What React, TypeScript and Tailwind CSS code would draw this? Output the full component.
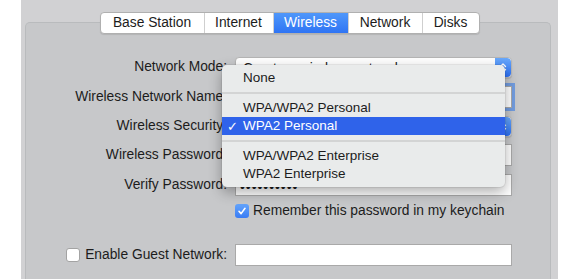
import type { ReactNode } from "react";

const TABS = [
  { label: "Base Station", width: "w-[103px]" },
  { label: "Internet", width: "w-[69px]" },
  { label: "Wireless", width: "w-[75px]" },
  { label: "Network", width: "w-[74px]" },
  { label: "Disks", width: "w-[57px]" }
];

const Stepper = () => (
  <div className="flex h-full w-[16px] items-center justify-center rounded-r-[4px] bg-gradient-to-b from-[#6aa9fb] to-[#2c6ff4]">
    <svg width="8" height="12" viewBox="0 0 8 12" fill="none" stroke="white" strokeWidth="1.4" strokeLinecap="round" strokeLinejoin="round">
      <path d="M1.5 4.5 4 2l2.5 2.5" />
      <path d="M1.5 7.5 4 10l2.5-2.5" />
    </svg>
  </div>
);

const PopUp = ({ value }: { value: string }) => (
  <div className="flex h-full w-[277px] items-stretch overflow-hidden rounded-[4px] border border-[#b5b5b5] bg-white shadow-[0_1px_1px_rgba(0,0,0,0.12)]">
    <div className="flex flex-1 items-center pl-[7px] pt-[3px]">{value}</div>
    <Stepper />
  </div>
);

const TextField = ({ value = "", focused = false }: { value?: string; focused?: boolean }) => (
  <div
    className={`flex h-full w-[277px] items-center border border-[#a9a9a9] bg-white pl-[4px] pt-[6px] tracking-[1px] ${
      focused ? "shadow-[0_0_0_3px_rgba(86,142,228,0.75)]" : ""
    }`}
  >
    {value}
  </div>
);

const Row = ({ label, children, className }: { label?: ReactNode; children: ReactNode; className: string }) => (
  <div className={`flex items-center ${className}`}>
    <div className="flex w-[201px] items-center justify-end whitespace-nowrap">{label}</div>
    <div className="ml-[8px] flex h-full items-center">{children}</div>
  </div>
);

const MenuItem = ({ children, selected = false }: { children: ReactNode; selected?: boolean }) => (
  <div
    className={`relative flex h-[18px] items-center pl-[21px] ${
      selected ? "bg-[#2f63ea] text-white" : "text-[#1c1c1c]"
    }`}
  >
    {selected ? (
      <span className="absolute left-[5px] top-[0px] font-['DejaVu_Sans',sans-serif] text-[13px] font-bold">✓</span>
    ) : null}
    {children}
  </div>
);

const MenuSeparator = () => (
  <div className="flex h-[12px] items-center">
    <div className="h-[2px] w-full bg-[#d3d4d4]" />
  </div>
);

export default function App() {
  return (
    <div className="flex h-[279px] w-[580px] overflow-hidden bg-white font-['Liberation_Sans',Arial,sans-serif] text-[13.8px] text-[#1c1c1c]">
      <div className="ml-[21px] flex h-full w-[537px] flex-col bg-[#d1d1d3] pt-[12px]">
        <div className="relative z-10 flex justify-center">
          <div className="flex h-[22px] overflow-hidden rounded-[4px] border border-[#b0b0b0] bg-white shadow-[0_1px_1px_rgba(0,0,0,0.1)]">
            {TABS.map((tab, i) => (
              <div
                key={tab.label}
                className={`flex items-center justify-center ${tab.width} ${i > 0 ? "border-l border-[#cfcfcf]" : ""} ${
                  tab.label === "Wireless" ? "bg-gradient-to-b from-[#4f97fa] to-[#2f74f4] text-white" : ""
                }`}
              >
                {tab.label}
              </div>
            ))}
          </div>
        </div>

        <div className="relative -mt-[12px] ml-[4px] mr-[7px] flex flex-1 flex-col rounded-t-[5px] border border-b-0 border-[#b9bbbd] bg-[#c7c8ca] pt-[34px]">
          <Row label="Network Mode:" className="h-[21px]">
            <PopUp value="Create a wireless network" />
          </Row>
          <Row label="Wireless Network Name:" className="mt-[8px] h-[22px]">
            <TextField focused />
          </Row>
          <Row label="Wireless Security:" className="mt-[8px] h-[21px]">
            <PopUp value="" />
          </Row>
          <Row label="Wireless Password:" className="mt-[7px] h-[22px]">
            <TextField />
          </Row>
          <Row label="Verify Password:" className="mt-[8px] h-[22px]">
            <TextField value="••••••••••" />
          </Row>
          <Row className="mt-[8px] h-[14px]">
            <div className="flex items-center whitespace-nowrap">
              <div className="flex h-[14px] w-[14px] items-center justify-center rounded-[3px] bg-gradient-to-b from-[#64a4fb] to-[#3a7cf5]">
                <svg width="10" height="10" viewBox="0 0 10 10" fill="none" stroke="white" strokeWidth="1.6" strokeLinecap="round" strokeLinejoin="round">
                  <path d="M2 5.3 4.1 7.6 8 2.3" />
                </svg>
              </div>
              <span className="ml-[4px]">Remember this password in my keychain</span>
            </div>
          </Row>
          <Row
            className="mt-[26px] h-[22px]"
            label={
              <div className="flex items-center gap-[5px]">
                <div className="h-[14px] w-[14px] rounded-[3px] border border-[#a3a3a3] bg-white" />
                <span>Enable Guest Network:</span>
              </div>
            }
          >
            <TextField />
          </Row>

          <div className="absolute left-[196px] top-[42px] z-20 w-[283px] rounded-[5px] bg-[#e9ebeb] py-[4px] text-[13.5px] shadow-[0_5px_14px_rgba(0,0,0,0.32),0_0_0_1px_rgba(0,0,0,0.06)]">
            <MenuItem>None</MenuItem>
            <MenuSeparator />
            <MenuItem>WPA/WPA2 Personal</MenuItem>
            <MenuItem selected>WPA2 Personal</MenuItem>
            <MenuSeparator />
            <MenuItem>WPA/WPA2 Enterprise</MenuItem>
            <MenuItem>WPA2 Enterprise</MenuItem>
          </div>
        </div>
      </div>
    </div>
  );
}
